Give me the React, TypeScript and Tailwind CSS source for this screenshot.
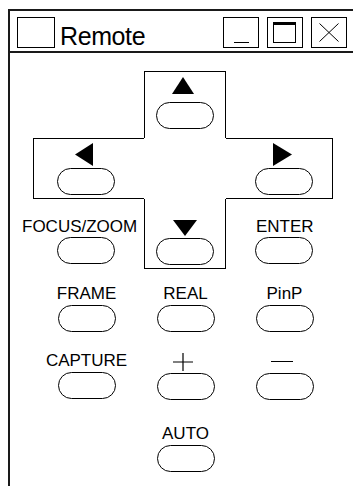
import React from 'react';

const font = "font-['Liberation_Sans',Arial,sans-serif]";

function Oval() {
  return <div className="w-[58px] h-[27px] rounded-full border border-black bg-white" />;
}

function Tri({ dir }: { dir: 'up' | 'down' | 'left' | 'right' }) {
  if (dir === 'up')
    return (
      <svg width="22" height="17" viewBox="0 0 22 17"><polygon points="11,0 22,17 0,17" fill="#000" /></svg>
    );
  if (dir === 'down')
    return (
      <svg width="24" height="16" viewBox="0 0 24 16"><polygon points="0,0 24,0 12,16" fill="#000" /></svg>
    );
  if (dir === 'left')
    return (
      <svg width="18" height="23" viewBox="0 0 18 23"><polygon points="0,11.5 18,0 18,23" fill="#000" /></svg>
    );
  return (
    <svg width="19" height="23" viewBox="0 0 19 23"><polygon points="0,0 19,11.5 0,23" fill="#000" /></svg>
  );
}

function Label({ children }: { children: React.ReactNode }) {
  return <div className="h-[17px] text-[17px] leading-none whitespace-nowrap text-black">{children}</div>;
}

function Key({ label }: { label: React.ReactNode }) {
  return (
    <div className="flex flex-col items-center gap-[3px]">
      <Label>{label}</Label>
      <Oval />
    </div>
  );
}

export default function App() {
  return (
    <div className={`w-[353px] h-[486px] bg-white overflow-hidden pt-[9px] pl-[8px] ${font}`}>
      <div className="h-full border-l-2 border-t-2 border-[#1a1a1a]">
        {/* title bar */}
        <div className="h-[42px] border-b-2 border-[#1a1a1a] flex items-start pt-[6px] pl-[7px]">
          <div className="w-[38px] h-[31px] border border-black" />
          <span className="ml-[5px] mt-[7px] text-[25px] leading-none tracking-[-0.4px] text-black">Remote</span>
          <div className="ml-auto mr-[6px] flex gap-[8px]">
            <div className="w-[36px] h-[31px] border border-black flex items-end pb-[4px] pl-[10px]">
              <div className="w-[15px] h-px bg-black" />
            </div>
            <div className="w-[36px] h-[31px] border border-black flex items-start pt-[4px] pl-[5px]">
              <div className="w-[23px] h-[21px] border border-black border-t-[3px]" />
            </div>
            <div className="w-[36px] h-[31px] border border-black flex items-center justify-center">
              <svg width="20" height="19" viewBox="0 0 20 19">
                <path d="M0.5 0.5 L19.5 18.5 M19.5 0.5 L0.5 18.5" stroke="#000" strokeWidth="1" fill="none" />
              </svg>
            </div>
          </div>
        </div>

        {/* d-pad */}
        <div className="ml-[23px] mt-[18px] grid grid-cols-[111px_82px_107px] grid-rows-[67px_61px_70px]">
          <div />
          <div className="border-l border-r border-t border-black flex flex-col items-center pt-[5px] gap-[8px]">
            <div className="-ml-[4px]"><Tri dir="up" /></div>
            <Oval />
          </div>
          <div />

          <div className="border-l border-t border-b border-black flex flex-col items-start pt-[4px] gap-[2px]">
            <div className="ml-[41px]"><Tri dir="left" /></div>
            <div className="ml-[23px]"><Oval /></div>
          </div>
          <div />
          <div className="border-r border-t border-b border-black flex flex-col items-start pt-[4px] gap-[2px]">
            <div className="ml-[47px]"><Tri dir="right" /></div>
            <div className="ml-[29px]"><Oval /></div>
          </div>

          <div className="flex flex-col items-start pt-[19px] gap-[2px]">
            <div className="-ml-[11px]"><Label>FOCUS/ZOOM</Label></div>
            <div className="ml-[24px]"><Oval /></div>
          </div>
          <div className="border-l border-r border-b border-black flex flex-col items-center pt-[21px] gap-[2px]">
            <Tri dir="down" />
            <Oval />
          </div>
          <div className="flex flex-col items-start pt-[19px] gap-[2px]">
            <div className="ml-[30px]"><Label>ENTER</Label></div>
            <div className="ml-[29px]"><Oval /></div>
          </div>
        </div>

        {/* button rows */}
        <div className="ml-[27px] mt-[16px] grid grid-cols-[99px_99px_99px] gap-y-[20px]">
          <Key label="FRAME" />
          <Key label="REAL" />
          <Key label="PinP" />

          <Key label="CAPTURE" />
          <div className="flex flex-col items-center gap-[3px]">
            <div className="h-[17px] -ml-[6px] mt-[1px]">
              <svg width="20" height="18" viewBox="0 0 20 18">
                <path d="M0 9 H20 M10 0 V18" stroke="#000" strokeWidth="1.2" fill="none" />
              </svg>
            </div>
            <Oval />
          </div>
          <div className="flex flex-col items-center gap-[3px]">
            <div className="h-[17px] -ml-[6px] mt-[1px] flex items-center">
              <div className="w-[22px] h-[1.2px] bg-black" />
            </div>
            <Oval />
          </div>

          <div />
          <div className="mt-[5px]"><Key label="AUTO" /></div>
          <div />
        </div>
      </div>
    </div>
  );
}
